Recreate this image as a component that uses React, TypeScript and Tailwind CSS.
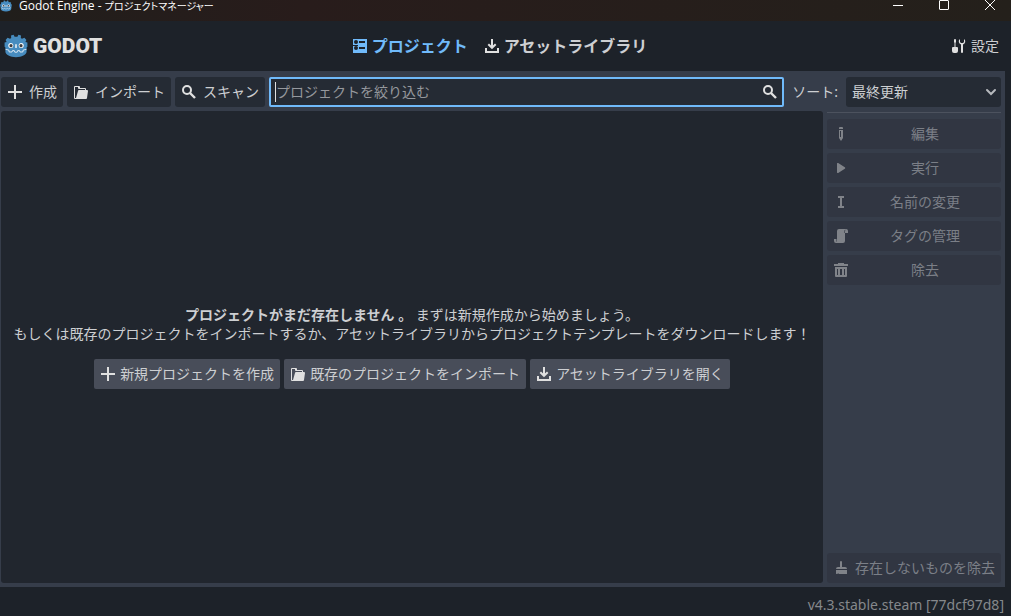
import type { ReactNode } from "react";

const iconClass = "w-4 h-4 shrink-0";

function GodotHead({ className }: { className?: string }) {
  return (
    <svg viewBox="0 0 24 24" className={className} aria-hidden="true">
      <path
        fill="#478cbf"
        d="M9.6.8 7 1.6 7.2 4 6 4.7 3.6 3.8 1.6 6 2.6 8 .6 8.6V12.8L1.4 13.4V17.6C1.4 21 6.4 23.2 12 23.2S22.6 21 22.6 17.6V13.4L23.4 12.8V8.6L21.4 8 22.4 6 20.4 3.8 18 4.7 16.8 4 17 1.6 14.4.8 13.4 2.8H10.6Z"
      />
      <circle cx="6.8" cy="11.6" r="2.5" fill="#fff" />
      <circle cx="17.2" cy="11.6" r="2.5" fill="#fff" />
      <circle cx="7" cy="11.7" r="1.6" fill="#414042" />
      <circle cx="17" cy="11.7" r="1.6" fill="#414042" />
      <path d="M12 10.8v2.6" stroke="#fff" strokeWidth="1.4" strokeLinecap="round" />
      <path
        d="M1.6 15.4 4.8 16 5.2 18H8L8.5 16.6H10.3L10.8 18.2H13.2L13.7 16.6H15.5L16 18H18.8L19.2 16 22.4 15.4"
        fill="none"
        stroke="#fff"
        strokeOpacity=".85"
        strokeWidth=".9"
      />
    </svg>
  );
}

const AddIcon = () => (
  <svg viewBox="0 0 16 16" className={iconClass} aria-hidden="true">
    <path d="M8 1v14M1 8h14" stroke="#e0e0e0" strokeWidth="2" />
  </svg>
);

const FolderIcon = () => (
  <svg viewBox="0 0 16 16" className={iconClass} fill="#e0e0e0" aria-hidden="true">
    <path d="M2 2a1 1 0 0 0-1 1v11a1 1 0 0 0 1 1h1v-1H2V3h3v1a1 1 0 0 0 1 1h6v1h1V5a1 1 0 0 0-1-1H7V3a1 1 0 0 0-1-1z" />
    <path d="M6 6a1 1 0 0 0-1 1L3 14v1h10a1 1 0 0 0 1-1l1-7a1 1 0 0 0-1-1z" />
  </svg>
);

const SearchIcon = () => (
  <svg viewBox="0 0 16 16" className={iconClass} fill="none" stroke="#e0e0e0" strokeWidth="2" aria-hidden="true">
    <circle cx="6" cy="6" r="4" />
    <path d="m9 9 5 5" strokeWidth="2.4" />
  </svg>
);

const DownloadIcon = () => (
  <svg viewBox="0 0 16 16" className={iconClass} fill="none" stroke="#e0e0e0" strokeWidth="2" aria-hidden="true">
    <path d="M8 1v8M4.3 6.2 8 9.8l3.7-3.6M2 10v4h12v-4" />
  </svg>
);

const ProjectListIcon = () => (
  <svg viewBox="0 0 16 16" className={iconClass} aria-hidden="true">
    <path fill="#70bafa" d="M1 1h14v14H1z" />
    <g fill="#1d2229">
      <circle cx="4" cy="4" r="2" />
      <circle cx="4" cy="10" r="2" />
      <path d="M7 3h6v2H7zM7 9h6v2H7zM1 7h5v1H1z" />
    </g>
  </svg>
);

const ToolsIcon = () => (
  <svg viewBox="0 0 16 16" className={iconClass} fill="#e0e0e0" aria-hidden="true">
    <path d="M3.5 1 3 2v2l.5 1v4H2a1 1 0 0 0-1 1v3a2 2 0 0 0 2 2h2a2 2 0 0 0 2-2v-3a1 1 0 0 0-1-1H4.5V5L5 4V2l-.5-1z" />
    <path d="M9 1a3.2 3.2 0 0 0 1 5.6V14a1 1 0 0 0 2 0V6.6A3.2 3.2 0 0 0 13 1v3l-1 1h-2L9 4z" />
  </svg>
);

const EditIcon = () => (
  <svg viewBox="0 0 16 16" className={iconClass} fill="#808389" aria-hidden="true">
    <path d="M7 1a1 1 0 0 0-1 1v1h4V2a1 1 0 0 0-1-1z" />
    <path fillRule="evenodd" d="M6 4v8l2 3 2-3V4zM7 5h1v6H7z" />
  </svg>
);

const PlayIcon = () => (
  <svg viewBox="0 0 16 16" className={iconClass} fill="#808389" aria-hidden="true">
    <path d="M4 3.8v8.4a.8.8 0 0 0 1.2.7l6.6-4.2a.8.8 0 0 0 0-1.4L5.2 3.1a.8.8 0 0 0-1.2.7z" />
  </svg>
);

const RenameIcon = () => (
  <svg viewBox="0 0 16 16" className={iconClass} fill="#808389" aria-hidden="true">
    <path d="M5 2v2h2v8H5v2h6v-2H9V4h2V2z" />
  </svg>
);

const ScriptIcon = () => (
  <svg viewBox="0 0 16 16" className={iconClass} fill="#808389" aria-hidden="true">
    <path d="M6 1a2 2 0 0 0-2 2v8h-.5v2a1 1 0 0 1-.5 1v-3H1v2a2 2 0 0 0 2 2h7a2 2 0 0 0 2-2V5h3V3a2 2 0 0 0-2-2z" />
    <path d="M11.5 5V3a1 1 0 0 1 1-1" fill="none" stroke="#313642" strokeWidth=".6" />
  </svg>
);

const RemoveIcon = () => (
  <svg viewBox="0 0 16 16" className={iconClass} fill="#808389" aria-hidden="true">
    <path d="M5 1v1H1v2h14V2h-4V1z" />
    <path fillRule="evenodd" d="M2 5v9a1 1 0 0 0 1 1h10a1 1 0 0 0 1-1V5zM4 7h1v6H4zM7 7h2v6H7zM11 7h1v6h-1z" />
  </svg>
);

const ClearIcon = () => (
  <svg viewBox="0 0 16 16" className={iconClass} fill="#808389" aria-hidden="true">
    <path d="M8 1a1 1 0 0 0-1 1v5H5a2 2 0 0 0-2 2h11a2 2 0 0 0-2-2H9V2a1 1 0 0 0-1-1z" />
    <path d="M3 10v4l3-.5v.5h8v-4z" />
  </svg>
);

function ToolButton({ icon, children }: { icon: ReactNode; children: ReactNode }) {
  return (
    <button className="flex h-[30px] shrink-0 items-center gap-1.5 rounded-[3px] bg-[#252b34] px-1.5">
      {icon}
      {children}
    </button>
  );
}

function StartButton({ icon, children }: { icon: ReactNode; children: ReactNode }) {
  return (
    <button className="flex h-[30px] items-center gap-1 rounded-[2px] bg-[#484d59] px-1.5">
      {icon}
      {children}
    </button>
  );
}

function SideButton({ icon, children }: { icon: ReactNode; children: ReactNode }) {
  return (
    <button
      disabled
      className="flex h-[30px] shrink-0 items-center gap-1.5 rounded-[3px] bg-[#313642] px-1.5 text-[#7b7f87]"
    >
      {icon}
      <span className="flex-1 text-center whitespace-nowrap">{children}</span>
    </button>
  );
}

const actions = [
  { label: "編集", icon: <EditIcon /> },
  { label: "実行", icon: <PlayIcon /> },
  { label: "名前の変更", icon: <RenameIcon /> },
  { label: "タグの管理", icon: <ScriptIcon /> },
  { label: "除去", icon: <RemoveIcon /> },
];

function TitleBar() {
  return (
    <div className="flex h-[21px] items-start bg-linear-to-r from-[#201e1b] via-[#281c1b] via-30% to-[#24201b] text-white">
      <GodotHead className="h-3 w-3" />
      <span className="ml-[7px] flex-1 font-['Open_Sans','Noto_Sans_CJK_JP',sans-serif] text-xs leading-3 [font-feature-settings:'palt']">
        Godot Engine - <span className="text-[10px]">プロジェクトマネージャー</span>
      </span>
      <div className="flex gap-1">
        <button aria-label="最小化" className="flex w-[42px] justify-center">
          <svg viewBox="0 0 12 12" className="h-3 w-3" stroke="#fff">
            <path d="M1 5.5h10" />
          </svg>
        </button>
        <button aria-label="最大化" className="flex w-[42px] justify-center">
          <svg viewBox="0 0 12 12" className="h-3 w-3" fill="none" stroke="#fff">
            <rect x="1.5" y=".5" width="9" height="9" rx=".5" />
          </svg>
        </button>
        <button aria-label="閉じる" className="flex w-[42px] justify-center">
          <svg viewBox="0 0 12 12" className="h-3 w-3" stroke="#fff">
            <path d="m1 0 10 10M11 0 1 10" />
          </svg>
        </button>
      </div>
    </div>
  );
}

function Header() {
  return (
    <header className="grid h-[50px] grid-cols-[1fr_auto_1fr] items-center pr-3">
      <div className="flex items-center gap-[5px] pl-1">
        <GodotHead className="h-6 w-6" />
        <span className="font-[Roboto,sans-serif] text-[21px] font-black text-[#e0e0e0]">GODOT</span>
      </div>
      <nav className="flex gap-4 text-base font-bold">
        <button className="flex items-center gap-1 text-[#70bafa]">
          <ProjectListIcon />
          プロジェクト
        </button>
        <button className="flex items-center gap-1">
          <DownloadIcon />
          アセットライブラリ
        </button>
      </nav>
      <button className="flex items-center gap-1 justify-self-end">
        <ToolsIcon />
        設定
      </button>
    </header>
  );
}

function Toolbar() {
  return (
    <div className="flex items-center gap-1">
      <ToolButton icon={<AddIcon />}>作成</ToolButton>
      <ToolButton icon={<FolderIcon />}>インポート</ToolButton>
      <ToolButton icon={<SearchIcon />}>スキャン</ToolButton>
      <label className="flex h-[30px] min-w-0 flex-1 items-center rounded-[2px] border-2 border-[#70bafa] bg-[#252b34] px-1">
        {/* text caret */}
        <span className="h-5 w-px bg-[#e0e0e0]" />
        <input
          type="text"
          aria-label="プロジェクトを絞り込む"
          placeholder="プロジェクトを絞り込む"
          className="min-w-0 flex-1 bg-transparent outline-none placeholder:text-[#95989d]"
        />
        <SearchIcon />
      </label>
      <label htmlFor="sort" className="px-1">
        ソート:
      </label>
      <div className="relative w-[155px]">
        <select id="sort" className="h-[30px] w-full appearance-none rounded-[3px] bg-[#252b34] px-1.5">
          <option>最終更新</option>
          <option>名前</option>
          <option>パス</option>
          <option>タグ</option>
        </select>
        <svg
          viewBox="0 0 12 12"
          className="pointer-events-none absolute top-[9px] right-1 h-3 w-3"
          fill="none"
          stroke="#b6b9bd"
          strokeWidth="2"
          strokeLinecap="round"
        >
          <path d="m2 4 4 4 4-4" />
        </svg>
      </div>
    </div>
  );
}

export default function App() {
  return (
    <div className="flex min-h-screen flex-col bg-[#1d2229] font-['Noto_Sans','Noto_Sans_CJK_JP',sans-serif] text-sm text-[#cdcfd2]">
      <TitleBar />
      <Header />
      <main className="mr-1.5 flex flex-1 flex-col gap-1 bg-[#363d4a] py-1 pt-1.5 pr-1 pl-px">
        <Toolbar />
        <div className="flex flex-1 gap-1">
          <section className="flex flex-1 flex-col items-center justify-center rounded-[3px] bg-[#21262e]">
            <p className="text-center leading-[19px]">
              <b>プロジェクトがまだ存在しません 。</b> まずは新規作成から始めましょう。
              <br />
              もしくは既存のプロジェクトをインポートするか、アセットライブラリからプロジェクトテンプレートをダウンロードします！
            </p>
            <div className="mt-4 flex gap-1">
              <StartButton icon={<AddIcon />}>新規プロジェクトを作成</StartButton>
              <StartButton icon={<FolderIcon />}>既存のプロジェクトをインポート</StartButton>
              <StartButton icon={<DownloadIcon />}>アセットライブラリを開く</StartButton>
            </div>
          </section>
          <aside className="flex w-[174px] flex-col gap-1">
            <hr className="mt-px mb-0.5 border-[#4c525e]" />
            {actions.map((a) => (
              <SideButton key={a.label} icon={a.icon}>
                {a.label}
              </SideButton>
            ))}
            <div className="flex-1" />
            <SideButton icon={<ClearIcon />}>存在しないものを除去</SideButton>
          </aside>
        </div>
      </main>
      <footer className="flex h-[29px] items-center justify-end pt-1.5 pr-[7px] text-[#85888c]">
        v4.3.stable.steam [77dcf97d8]
      </footer>
    </div>
  );
}
